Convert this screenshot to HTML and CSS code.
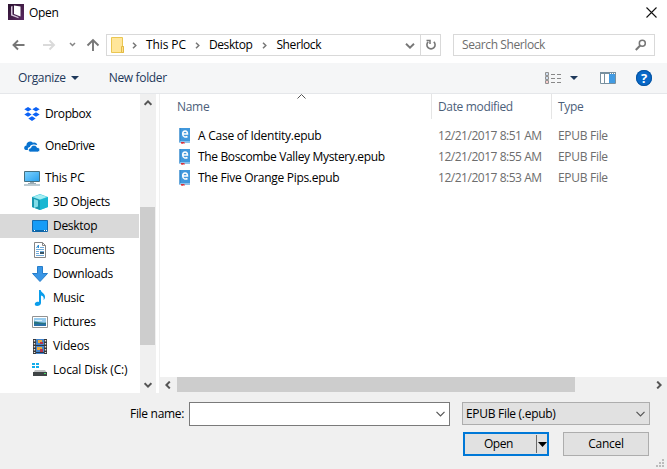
FILE: index.html
```html
<!DOCTYPE html>
<html lang="en">
<head>
<meta charset="utf-8">
<title>Open</title>
<link rel="stylesheet" href="styles.css">
</head>
<body>
<svg width="0" height="0" class="defs">
  <defs>
    <linearGradient id="screen" x1="0" y1="0" x2="1" y2="1"><stop offset="0" stop-color="#7fd3ff"/><stop offset="1" stop-color="#27a0ee"/></linearGradient>
    <linearGradient id="plum" x1="0" y1="0" x2="1" y2="1"><stop offset="0" stop-color="#2b1230"/><stop offset="1" stop-color="#5d2a62"/></linearGradient>
    <symbol id="book" viewBox="0 0 12 16"><path fill="#4198dc" d="M.5 0H11v15H.5z"/><path fill="#2e82c6" d="M.5 0h1v14h-1z"/><path fill="#dcecf8" d="M1 13.500h10v1H1z"/><path d="M3.700 6.100h4.800c0-4.200-4.800-4-4.800-.2 0 3.400 3 3.600 4.800 2.600" fill="none" stroke="#fff" stroke-width="1.500"/><path fill="#d9323a" d="M2 14h3.500v2l-.9-.7-.9.7-.8-.7-.9.7z"/></symbol>
  </defs>
</svg>
<div class="dialog">
  <header class="titlebar">
    <svg class="app" width="16" height="16"><path fill="url(#plum)" d="M0 0h16v16H0z"/><path fill="#fff" d="M6 1.500l6.500 1v10L6 10z"/><path fill="#d8c8dc" d="M3 2.500l1.500-.5v8.500l6 2.500v1.300L3 11.500z"/></svg>
    <span class="title">Open</span>
    <svg class="close" width="11" height="11"><path d="M.5.5l10 10M10.500.5l-10 10" stroke="#111" stroke-width="1.100"/></svg>
  </header>
  <nav class="navbar">
    <svg class="arrows" width="93" height="22" fill="none" stroke-width="1.900">
      <path d="M12.500 11H1.500M6 6.500L1.500 11 6 15.500" stroke="#777"/>
      <path d="M31 11h11M37.500 6.500L42 11l-4.500 4.500" stroke="#dadada"/>
      <path d="M58 9l2.500 2.500L63 9" stroke="#858585" stroke-width="1.500"/>
      <path d="M81 17V6.500M75.500 11.500L81 6l5.500 5.500" stroke="#777"/>
    </svg>
    <div class="address">
      <svg class="folder" width="13" height="16"><path fill="#ffe69a" stroke="#eac651" d="M.5.5h11v9h1v6H.5z"/><path fill="#ffe08a" stroke="#e2ba45" d="M10.500 9.500h2v6h-2z"/></svg>
      <svg class="chev c1" width="5" height="7"><path d="M1 .8l2.800 2.700L1 6.200"/></svg>
      <span class="crumb k1">This PC</span>
      <svg class="chev" width="5" height="7"><path d="M1 .8l2.800 2.700L1 6.200"/></svg>
      <span class="crumb k2">Desktop</span>
      <svg class="chev" width="5" height="7"><path d="M1 .8l2.800 2.700L1 6.200"/></svg>
      <span class="crumb k3">Sherlock</span>
      <svg class="down" width="10" height="6"><path d="M1 .8l4 3.900L9 .8" fill="none" stroke="#777" stroke-width="1.900"/></svg>
      <div class="refresh"><svg width="12" height="12"><path d="M3.200 2.800A4.100 4.100 0 1 0 8.800 2.800" fill="none" stroke="#777" stroke-width="1.600"/><path d="M1.500 1.500H5V5" fill="none" stroke="#777" stroke-width="1.500"/></svg></div>
    </div>
    <div class="search"><span class="k4">Search Sherlock</span><svg width="12" height="12"><circle cx="7.300" cy="4.300" r="3" fill="none" stroke="#777" stroke-width="1.500"/><path d="M5.200 6.500L.8 11" stroke="#777" stroke-width="2"/></svg></div>
  </nav>
  <div class="toolbar">
    <span class="k5">Organize</span>
    <svg class="tri" width="8" height="4"><path fill="#1e395b" d="M0 0h8L4 4z"/></svg>
    <span class="newf k6">New folder</span>
    <svg class="view" width="17" height="13"><g fill="#fff" stroke="#929292"><path d="M.5.5h3v3h-3zM.5 4.500h3v3h-3zM.5 8.500h3v3h-3z"/></g><path d="M6 2.500h4m2 0h4M6 6.500h4m2 0h4M6 10.500h4m2 0h4" stroke="#888"/><path fill="#467cc0" d="M1.500 1.500h1v1h-1zM1.500 5.500h1v1h-1z"/><path fill="#d33" d="M1.500 9.500h1v1h-1z"/></svg>
    <svg class="tri" width="8" height="4"><path fill="#1e395b" d="M0 0h8L4 4z"/></svg>
    <svg class="pane" width="16" height="12"><path fill="#fff" stroke="#78909f" d="M.5.5h15v11H.5z"/><path fill="#78909f" d="M0 0h16v2H0zM4 2h1v10H4z"/><path fill="#419be3" d="M9 2h6v9H9z"/><path fill="#fff" d="M10 1h1v1h-1zm2 0h1v1h-1zm2 0h1v1h-1z"/></svg>
    <div class="help"><span>?</span></div>
  </div>
  <main class="body">
    <aside class="sidebar">
      <ul class="tree">
        <li class="root"><svg width="16" height="16" fill="#0b62f6"><path d="M4 1l3.700 2.300L4 5.600.3 3.300zM12 1l3.700 2.300L12 5.600 8.300 3.300zM4 6.200l3.700 2.300L4 10.800.3 8.500zM12 6.200l3.700 2.300-3.700 2.300-3.700-2.300zM8 10.300l3.700 2.300L8 14.900l-3.700-2.300z"/></svg><span class="s1">Dropbox</span></li>
        <li class="root"><svg width="16" height="16" fill="#0872cf"><path d="M1.800 12C-.8 11.500 0 7.500 2.500 7.500 2 4 6.500 2 9 4.700c2-.8 4 .2 4.200 2.300C8.500 5.500 6 7 6 9c-2 .2-2.500 1.500-2 3z"/><path stroke="#fff" stroke-width=".7" d="M6.200 14c-2.500-.5-2-4 .5-4 .5-3.500 5.500-3.500 6.300-.6 3.200-.3 3.800 4.200.7 4.600z"/></svg><span class="s2">OneDrive</span></li>
        <li class="root pc"><svg width="16" height="16"><path fill="url(#screen)" stroke="#457080" d="M.5 1.500h15v10H.5z"/><path fill="#9aacb5" d="M6 12h4v1H6zM4 13h8v1H4z"/><path fill="#7896a5" d="M0 14.500h16v1H0z"/></svg><span class="s3">This PC</span></li>
        <li><svg width="16" height="16"><path fill="#3dcbdf" d="M0 3l8-3 8 3v10l-8 3-8-3z"/><path fill="#1797af" d="M0 3l8 3v10l-8-3z"/><path fill="#a5edf2" d="M1 3l7-2.500L15 3 8 5.500z"/><path fill="#18b6d2" d="M8 6l8-3v10l-8 3z"/><path fill="#80dce8" d="M2 5l4 1.500v6L2 14z"/></svg><span class="s4">3D Objects</span></li>
        <li class="selected"><svg width="16" height="16"><path fill="#169cf7" stroke="#146aae" d="M.5 2.500h15v11H.5z"/><path fill="#0b65a8" d="M1 12h14v1.500H1z"/><path d="M2 12.500h1m9 0h1m1 0h1" stroke="#fff"/></svg><span class="s5">Desktop</span></li>
        <li><svg width="16" height="16"><path fill="#fff" stroke="#858585" d="M2.500.5h8l3 3v12h-11z"/><path fill="none" stroke="#858585" d="M10.500.5v3h3"/><path d="M4 7.500h8M4 9.500h3m1 0h4M4 11.500h3m1 0h4M4 13.500h8M8 5.500h4" stroke="#6fabdc"/><path fill="#2c8bd0" d="M4 6l2-3h1v3H6V5L5 6z"/><path fill="#395565" d="M8 10h4v2H8z"/></svg><span class="s6">Documents</span></li>
        <li><svg width="16" height="16"><path fill="#3996e6" stroke="#267dca" d="M5.500.5h5v7h5L8 15.500.5 7.500h5z"/></svg><span class="s7">Downloads</span></li>
        <li><svg width="16" height="16"><path fill="#0a9deb" d="M7 0h1.700c.3 3 4.800 3.400 4.300 7.500-.2 1.500-1.200 2.500-1.500 2.500.8-2.500-.3-4-2.500-4.600V13c0 2-2 3-4 3-3 0-3-3.500 0-4.200.8-.2 1.500 0 2 .2z"/></svg><span class="s8">Music</span></li>
        <li><svg width="16" height="16"><path fill="#fff" stroke="#929292" d="M.5 2.500h15v11H.5z"/><path fill="#98ccef" d="M2 4h12v8H2z"/><path fill="#dcf0f8" d="M3 6h7v1H3z"/><path fill="#287480" d="M2 7.500c3-.5 8 2 12 1V10H2z"/><path fill="#286fa7" d="M2 10h12v2H2z"/></svg><span class="s9">Pictures</span></li>
        <li><svg width="16" height="16"><path fill="#383838" d="M1 1h14v15H1z"/><path fill="#4686cc" d="M4 1h8v15H4z"/><path stroke="#e3e3e3" stroke-width="1.400" stroke-dasharray="1.500 1.500" d="M2.500 2v13M13.500 2v13"/><path fill="#e9a83b" d="M6 2h4v3H6zM5 9h5v3H5z"/><path fill="#b5344c" d="M8 4h3v2H8zM8 11h3v3H8z"/><path fill="#25374e" d="M4 7h8v1H4zM4 14h8v1H4z"/></svg><span class="s10">Videos</span></li>
        <li><svg width="16" height="16"><path fill="#13adeb" d="M0 1h3v2H0zM4 1h3v2H4zM0 4h3v2H0zM4 4h3v2H4z"/><path fill="#bfc1c2" d="M3 8h10l2 3H1z"/><path fill="#3f4446" d="M1 10h14v4H1z"/><path fill="#45df64" d="M12 11h2v1h-2z"/></svg><span class="s11">Local Disk (C:)</span></li>
      </ul>
      <div class="vscroll"><svg width="8" height="6"><path d="M.6 4.800L4 1.400l3.400 3.400"/></svg><div class="vthumb"></div><svg width="8" height="6"><path d="M.6 1.200L4 4.600l3.400-3.400"/></svg></div>
    </aside>
    <section class="files">
      <svg class="sort" width="9" height="5"><path d="M.5 4.500l4-4 4 4" fill="none" stroke="#555"/></svg>
      <div class="row head"><span class="name"><b class="h1">Name</b></span><span class="date"><b class="h2">Date modified</b></span><span class="type"><b class="h3">Type</b></span></div>
      <div class="list">
        <div class="row"><span class="name"><svg width="12" height="16"><use href="#book"/></svg><b class="f1">A Case of Identity.epub</b></span><span class="date"><b class="dt">12/21/2017 8:51 AM</b></span><span class="type"><b class="ty">EPUB File</b></span></div>
        <div class="row"><span class="name"><svg width="12" height="16"><use href="#book"/></svg><b class="f2">The Boscombe Valley Mystery.epub</b></span><span class="date"><b class="dt">12/21/2017 8:55 AM</b></span><span class="type"><b class="ty">EPUB File</b></span></div>
        <div class="row"><span class="name"><svg width="12" height="16"><use href="#book"/></svg><b class="f3">The Five Orange Pips.epub</b></span><span class="date"><b class="dt">12/21/2017 8:53 AM</b></span><span class="type"><b class="ty">EPUB File</b></span></div>
      </div>
      <div class="hscroll"><svg width="6" height="8"><path d="M4.800.6L1.400 4l3.400 3.400"/></svg><div class="hthumb"></div><svg width="6" height="8"><path d="M1.200.6L4.600 4 1.200 7.400"/></svg></div>
    </section>
  </main>
  <footer class="footer">
    <div class="fields">
      <label class="k7">File name:</label>
      <div class="combo input"><svg width="9" height="6"><path d="M.5.8l4 4 4-4"/></svg></div>
      <div class="combo select"><span class="k8">EPUB File (.epub)</span><svg width="9" height="6"><path d="M.5.8l4 4 4-4"/></svg></div>
    </div>
    <div class="buttons">
      <div class="btn open"><span><b class="k9">Open</b></span><i></i><svg width="9" height="5"><path d="M0 0h9L4.500 5z"/></svg></div>
      <div class="btn cancel"><b class="k10">Cancel</b></div>
    </div>
    <svg class="grip" width="8" height="8" fill="#bcbcbc"><path d="M6 0h2v2H6zM3 3h2v2H3zM6 3h2v2H6zM0 6h2v2H0zM3 6h2v2H3zM6 6h2v2H6z"/></svg>
  </footer>
</div>
</body>
</html>
```
FILE: styles.css
```css
* { box-sizing: border-box; }
body { margin: 0; background: #fff; font: 12px/16px "Open Sans", "Noto Sans", sans-serif; color: #000; letter-spacing: -0.3px; white-space: nowrap; }
svg { display: block; flex: none; }
b { font-weight: 400; }
.defs { position: absolute; }
.dialog { width: 667px; height: 469px; display: flex; flex-direction: column; overflow: hidden; }
.titlebar { height: 34px; display: flex; align-items: flex-start; padding: 4px 10px 0 8px; }
.title { margin: 1px auto 0 5px; }
.close { margin-top: 3px; }
.navbar { height: 29px; display: flex; padding-left: 12px; }
.arrows { margin-right: 1px; }
.address { width: 335px; height: 22px; border: 1px solid #d9d9d9; display: flex; align-items: center; padding-left: 4px; }
.chev { fill: none; stroke: #777; stroke-width: 1.5; margin-right: 9px; }
.c1 { margin-left: 8px; margin-right: 9px; }
.crumb { margin-right: 9px; }
.k1 { letter-spacing: -0.1px; }
.k2 { letter-spacing: -0.4px; margin-right: 10px; }
.k3 { letter-spacing: -0.4px; }
.k4 { letter-spacing: -0.4px; }
.k6 { letter-spacing: -0.35px; }
.s3, .s10, .s11, .s1 { letter-spacing: -0.15px; }
.s2, .s4, .k9 { letter-spacing: -0.4px; }
.s1 { letter-spacing: -0.4px; }
.dt { letter-spacing: -0.47px; }
.f2 { letter-spacing: -0.35px; }
.f1 { letter-spacing: -0.25px; }
.h2 { letter-spacing: -0.35px; }
.down { margin: 1px 5px 0 auto; }
.refresh { width: 20px; height: 20px; border-left: 1px solid #d9d9d9; display: flex; align-items: center; justify-content: center; }
.search { width: 202px; height: 22px; margin-left: 12px; border: 1px solid #d9d9d9; display: flex; align-items: center; justify-content: space-between; padding: 0 7px 0 8px; color: #6d6d6d; }
.toolbar { height: 31px; background: #f5f6f7; border-bottom: 1px solid #e5e7ea; display: flex; align-items: center; padding: 0 15px 0 18px; color: #1e395b; }
.toolbar .tri { margin-left: 5px; }
.newf { margin-left: 30px; }
.view { margin: 1px 3px 0 auto; }
.pane { margin: 0 20px 0 22px; }
.help { width: 16px; height: 16px; border-radius: 50%; background: #0868c8; box-shadow: inset 0 0 0 1px #0754a0; color: #fff; font-weight: 700; font-size: 13px; text-align: center; line-height: 16px; letter-spacing: 0; }
.body { height: 299px; display: flex; }
.sidebar { width: 160px; display: flex; border-right: 1px solid #f0f0f0; }
.tree { width: 140px; margin: 0; padding: 8px 1px 0 0; list-style: none; }
.tree li { height: 24px; display: flex; align-items: center; gap: 5px; padding-left: 32px; }
.tree .root { padding-left: 24px; margin-bottom: 8px; }
.tree .pc { margin-bottom: 0; }
.tree .selected { background: #d9d9d9; }
.vscroll { width: 16px; background: #f0f0f0; display: flex; flex-direction: column; align-items: center; padding: 6px 0 5px; }
.vscroll svg, .hscroll svg { fill: none; stroke: #555; stroke-width: 2; }
.vthumb { width: 15px; height: 138px; margin: 101px 1px auto 0; background: #cdcdcd; }
.files { width: 507px; position: relative; display: flex; flex-direction: column; }
.sort { position: absolute; left: 137px; top: 0; }
.row { display: flex; height: 21px; align-items: center; color: #6d6d6d; }
.name { width: 271px; height: 100%; padding-left: 19px; display: flex; align-items: center; gap: 7px; color: #000; }
.date { width: 120px; height: 100%; padding-left: 7px; display: flex; align-items: center; }
.type { flex: 1; height: 100%; padding-left: 7px; display: flex; align-items: center; }
.head, .head .name { color: #4c607a; }
.head { height: 25px; }
.head .name { padding-left: 17px; }
.head .date, .head .type { border-left: 1px solid #e5e5e5; padding-left: 6px; }
.list { padding-top: 6px; }
.hscroll { margin-top: auto; height: 16px; background: #f0f0f0; display: flex; align-items: center; padding: 0 5px; }
.hthumb { width: 398px; height: 15px; margin: 0 auto 1px 6px; background: #cdcdcd; }
.footer { flex: 1; position: relative; background: #f0f0f0; padding-top: 9px; }
.fields { display: flex; padding-left: 130px; }
.fields label { line-height: 24px; width: 59px; }
.combo { display: flex; align-items: center; justify-content: space-between; padding: 0 4px; }
.combo svg { fill: none; stroke: #555; stroke-width: 1.2; margin-left: auto; }
.input { width: 261px; height: 24px; border: 1px solid #7a7a7a; background: #fff; }
.select { width: 188px; height: 23px; margin-left: 12px; border: 1px solid #adadad; background: #e1e1e1; padding-left: 3px; }
.buttons { display: flex; padding: 6px 0 0 463px; gap: 14px; }
.btn { width: 86px; height: 24px; background: #e1e1e1; border: 1px solid #adadad; display: flex; align-items: center; justify-content: center; }
.open { border: 2px solid #0078d7; }
.open span { width: 70px; text-align: center; padding-right: 4px; }
.open i { width: 1px; height: 18px; background: #696969; margin-right: 1px; }
.grip { position: absolute; right: 3px; bottom: 2px; }
```
